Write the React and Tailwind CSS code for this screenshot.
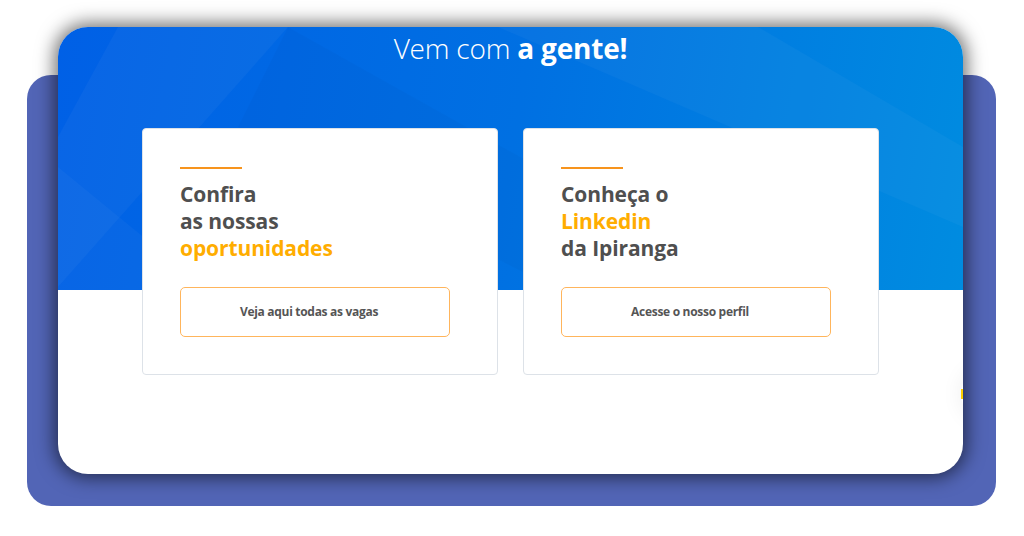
import React from "react";

function Card({ lines, button }) {
  return (
    <div className="w-[356px] bg-white border border-[#dde2e8] rounded-[4px] pt-[38px] pb-[37px] px-[37px]">
      <div className="w-[62px] h-[2px] bg-[#f7941d]" />
      <div className="mt-[12px] text-[21px] leading-[27px] font-bold text-[#4f4f4f] tracking-[-0.1px]">
        {lines.map((l, i) => (
          <div key={i} className={l.accent ? "text-[#ffad00]" : ""}>
            {l.text}
          </div>
        ))}
      </div>
      <button className="mt-[25px] w-[270px] h-[50px] rounded-[5px] border border-[#ffb55c] bg-white pr-[12px] text-[12px] font-bold text-[#555555] tracking-[-0.3px]">
        {button}
      </button>
    </div>
  );
}

export default function App() {
  return (
    <div
      className="w-[1024px] h-[536px] bg-white overflow-hidden grid"
      style={{ fontFamily: '"Open Sans", "Noto Sans", sans-serif' }}
    >
      <div className="col-start-1 row-start-1 ml-[27px] mt-[75px] w-[969px] h-[431px] rounded-[24px] bg-[#5265b6]" />
      <div className="col-start-1 row-start-1 ml-[58px] mt-[27px] w-[905px] h-[447px] rounded-[30px] bg-white shadow-[0_0_18px_4px_rgba(0,0,0,0.55)] overflow-hidden grid relative">
        <div className="col-start-1 row-start-1 h-[263px] bg-[linear-gradient(100deg,#0060e6_0%,#0070e2_50%,#008ce0_100%)] overflow-hidden">
          <svg width="905" height="263" viewBox="0 0 905 263" className="block">
            <polygon points="0,110 60,0 230,0 0,260" fill="rgba(255,255,255,0.035)" />
            <polygon points="230,0 180,100 500,263 700,263" fill="rgba(0,0,0,0.02)" />
            <polygon points="440,0 700,0 905,120 905,200" fill="rgba(255,255,255,0.03)" />
            <polygon points="0,140 0,263 150,263" fill="rgba(255,255,255,0.03)" />
          </svg>
        </div>
        <div className="col-start-1 row-start-1 flex flex-col items-center pt-[6px]">
          <div className="text-[28px] leading-[30px] text-white tracking-[-0.2px]">
            <span className="font-light">Vem com </span>
            <span className="font-bold">a gente!</span>
          </div>
          <div className="mt-[65px] flex gap-[25px]">
            <Card
              lines={[
                { text: "Confira" },
                { text: "as nossas" },
                { text: "oportunidades", accent: true },
              ]}
              button="Veja aqui todas as vagas"
            />
            <Card
              lines={[
                { text: "Conheça o" },
                { text: "Linkedin", accent: true },
                { text: "da Ipiranga" },
              ]}
              button="Acesse o nosso perfil"
            />
          </div>
        </div>
        <div className="absolute left-[903px] top-[339px] w-[56px] h-[56px] rounded-full shadow-[0_0_22px_rgba(0,0,0,0.07)] flex items-center">
          <div className="w-[2px] h-[10px] bg-[#ffd000]" />
        </div>
      </div>
    </div>
  );
}
